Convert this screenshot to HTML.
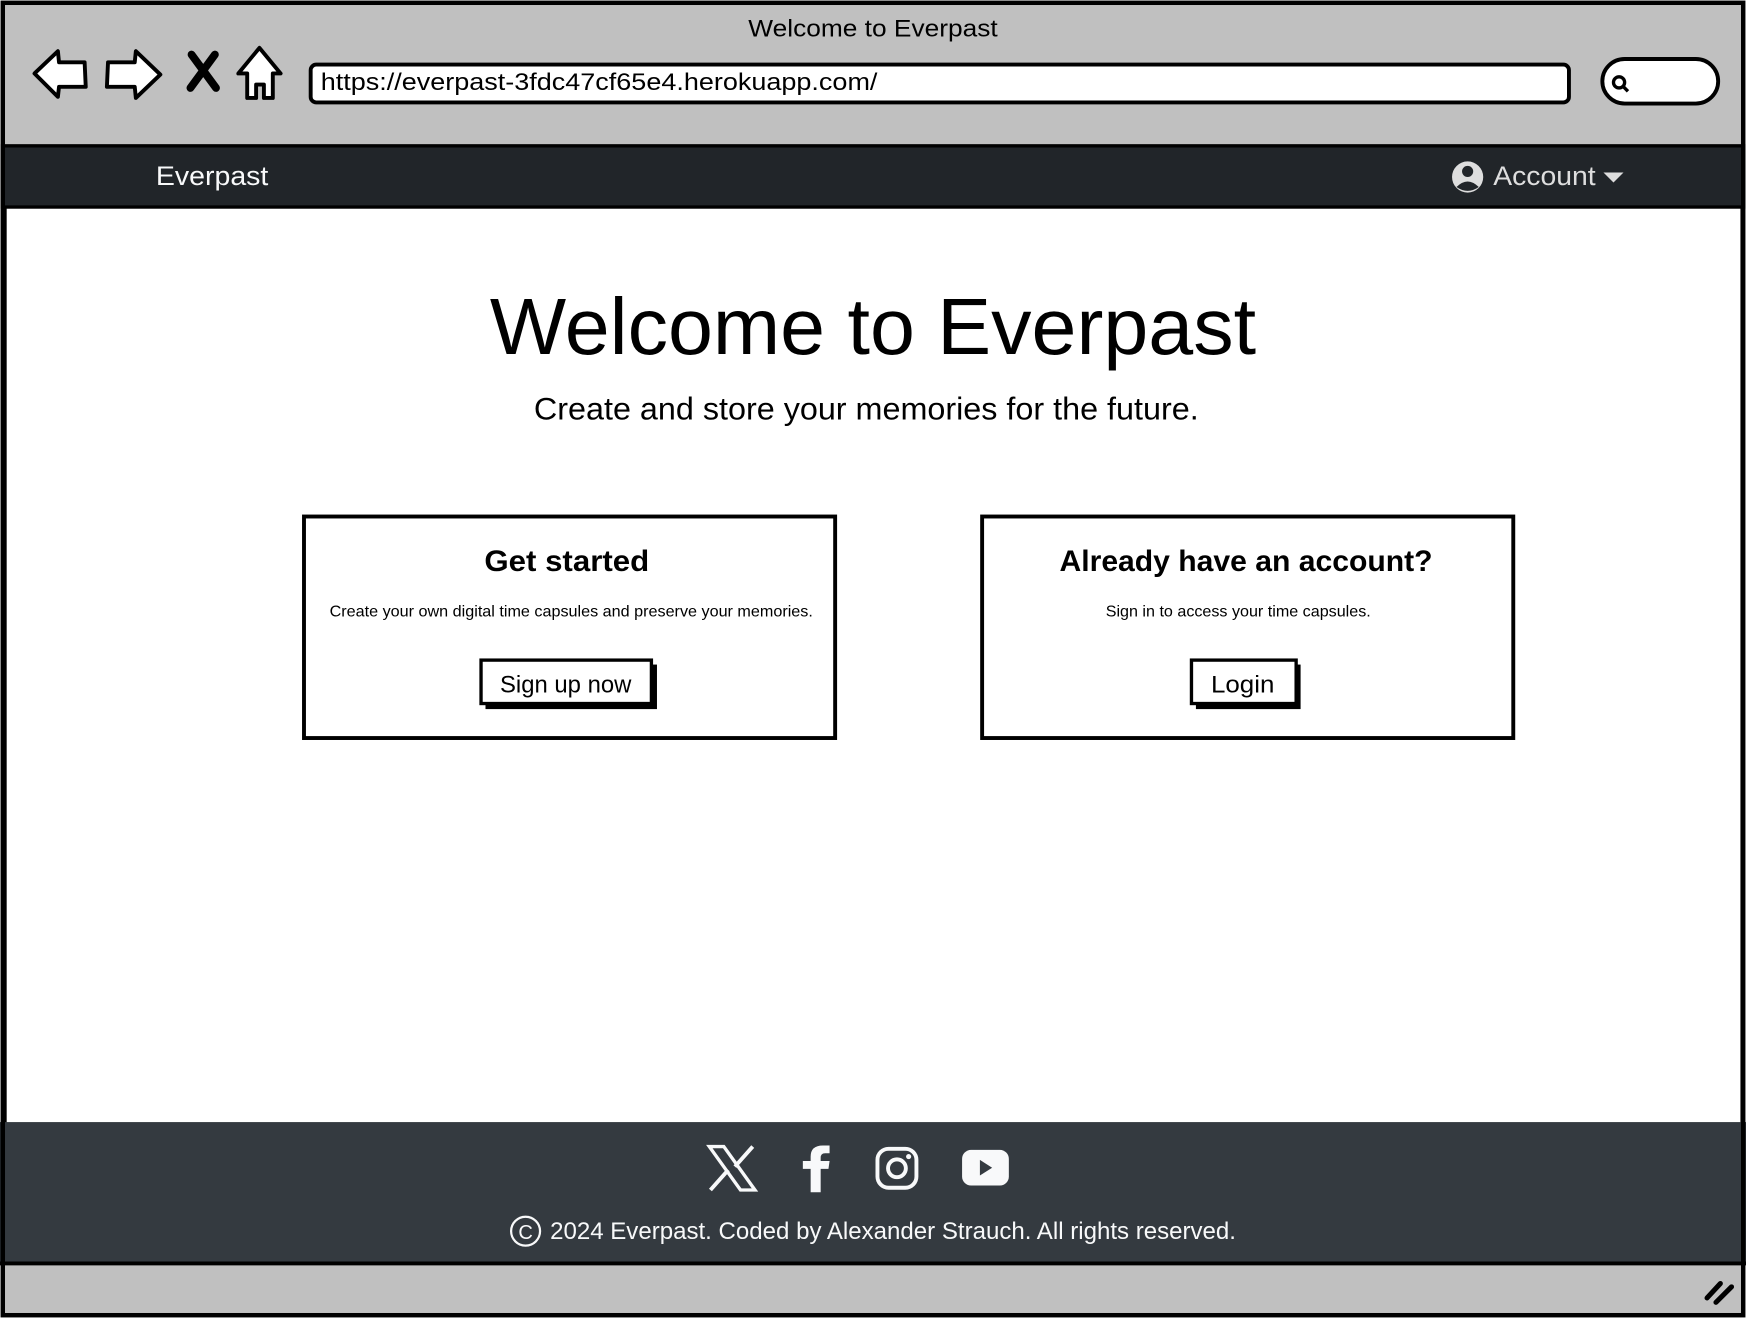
<!DOCTYPE html>
<html><head><meta charset="utf-8"><style>
html,body{margin:0;padding:0;background:#fff;width:1746px;height:1318px;overflow:hidden}
svg{display:block}
text{font-family:"Liberation Sans",sans-serif}
</style></head><body>
<svg width="1746" height="1318" viewBox="0 0 1568 1184" preserveAspectRatio="none" xmlns="http://www.w3.org/2000/svg">
<rect x="0" y="0" width="1568" height="1184" fill="#fff"/>
<rect x="3" y="3" width="1562" height="128" fill="#c0c0c0"/>
<text x="784" y="33" font-size="22" text-anchor="middle" fill="#000" textLength="224" lengthAdjust="spacingAndGlyphs">Welcome to Everpast</text>
<path d="M31 66 L52 46 L53 56 L76 56 L77 78 L53 78 L52 87 Z" fill="#fff" stroke="#000" stroke-width="3.5" stroke-linejoin="round"/>
<path d="M144 67 L122 46 L121 56 L97 56 L96 78 L121 78 L122 88 Z" fill="#fff" stroke="#000" stroke-width="3.5" stroke-linejoin="round"/>
<path d="M172 49 L194 79 M193 49 L171 79" stroke="#000" stroke-width="7" stroke-linecap="round"/>
<path d="M233 43 L252 66 L245 66 L245 88 L237 88 L237 76 L230 76 L230 88 L222 88 L222 66 L214 66 Z" fill="#fff" stroke="#000" stroke-width="3.5" stroke-linejoin="round"/>
<rect x="279" y="58" width="1130" height="34" rx="5" fill="#fff" stroke="#000" stroke-width="3.5"/>
<text x="288" y="81" font-size="22" fill="#000" textLength="500" lengthAdjust="spacingAndGlyphs">https://everpast-3fdc47cf65e4.herokuapp.com/</text>
<rect x="1439" y="53" width="104" height="40" rx="20" fill="#fff" stroke="#000" stroke-width="3.5"/>
<circle cx="1454" cy="74" r="5" fill="none" stroke="#000" stroke-width="3"/>
<path d="M1457 77 L1462 82" stroke="#000" stroke-width="3"/>
<rect x="2" y="131" width="1564" height="55" fill="#212529" stroke="#000" stroke-width="3"/>
<text x="140" y="166" font-size="24" fill="#f8f9fa" textLength="101" lengthAdjust="spacingAndGlyphs">Everpast</text>
<circle cx="1318" cy="159" r="14" fill="#dedede"/>
<circle cx="1318" cy="154" r="5" fill="#212529"/>
<path d="M1308 168 Q1318 158 1328 168 Q1318 175 1308 168 Z" fill="#212529"/>
<text x="1341" y="166" font-size="24" fill="#dedede" textLength="92" lengthAdjust="spacingAndGlyphs">Account</text>
<path d="M1440 155 L1458 155 L1449 164 Z" fill="#dedede"/>
<path d="M4.5 186 L4.5 1136 M1564.5 186 L1564.5 1136" stroke="#000" stroke-width="3"/>
<text x="784" y="318" font-size="72" text-anchor="middle" fill="#000" textLength="688" lengthAdjust="spacingAndGlyphs">Welcome to Everpast</text>
<text x="778" y="377" font-size="28" text-anchor="middle" fill="#000" textLength="597" lengthAdjust="spacingAndGlyphs">Create and store your memories for the future.</text>
<rect x="273" y="464" width="477" height="199" fill="#fff" stroke="#000" stroke-width="3.5"/>
<rect x="882" y="464" width="477" height="199" fill="#fff" stroke="#000" stroke-width="3.5"/>
<text x="509" y="513" font-size="27" font-weight="bold" text-anchor="middle" textLength="148" lengthAdjust="spacingAndGlyphs">Get started</text>
<text x="1119" y="513" font-size="27" font-weight="bold" text-anchor="middle" textLength="335" lengthAdjust="spacingAndGlyphs">Already have an account?</text>
<text x="513" y="554" font-size="14" text-anchor="middle" textLength="434" lengthAdjust="spacingAndGlyphs">Create your own digital time capsules and preserve your memories.</text>
<text x="1112" y="554" font-size="14" text-anchor="middle" textLength="238" lengthAdjust="spacingAndGlyphs">Sign in to access your time capsules.</text>
<rect x="436" y="597" width="154" height="40" fill="#000"/>
<rect x="432" y="593" width="153" height="39" fill="#fff" stroke="#000" stroke-width="3"/>
<text x="508" y="622" font-size="22" text-anchor="middle" textLength="118" lengthAdjust="spacingAndGlyphs">Sign up now</text>
<rect x="1074" y="597" width="94" height="40" fill="#000"/>
<rect x="1070" y="593" width="94" height="39" fill="#fff" stroke="#000" stroke-width="3"/>
<text x="1116" y="622" font-size="22" text-anchor="middle" textLength="57" lengthAdjust="spacingAndGlyphs">Login</text>
<rect x="0" y="1008" width="1568" height="126" fill="#343a40"/>
<path d="M637 1030 L650 1030 L678 1069 L665 1069 Z" fill="none" stroke="#f8f9fa" stroke-width="3"/>
<path d="M676 1030 L660 1048 M638 1069 L654 1051" stroke="#f8f9fa" stroke-width="3.5"/>
<path d="M728 1071 L728 1050 L721 1050 L721 1043 L728 1043 L728 1039 Q728 1029 739 1029 L745 1029 L745 1036 L741 1036 Q737 1036 737 1040 L737 1043 L745 1043 L744 1050 L737 1050 L737 1071 Z" fill="#f8f9fa"/>
<rect x="788" y="1032" width="35" height="35" rx="10" fill="none" stroke="#f8f9fa" stroke-width="3.5"/>
<circle cx="805.5" cy="1049.5" r="8" fill="none" stroke="#f8f9fa" stroke-width="3.5"/>
<circle cx="816" cy="1039" r="2.3" fill="#f8f9fa"/>
<rect x="864" y="1033" width="42" height="32" rx="8" fill="#f8f9fa"/>
<path d="M880 1042 L891 1049 L880 1056 Z" fill="#343a40"/>
<circle cx="472" cy="1106" r="13" fill="none" stroke="#f8f9fa" stroke-width="2"/>
<text x="472" y="1113" font-size="18" text-anchor="middle" fill="#f8f9fa">C</text>
<text x="494" y="1113" font-size="22" fill="#f8f9fa" textLength="616" lengthAdjust="spacingAndGlyphs">2024 Everpast. Coded by Alexander Strauch. All rights reserved.</text>
<rect x="3" y="1135" width="1562" height="45" fill="#c0c0c0"/>
<path d="M0 1135 L1568 1135" stroke="#000" stroke-width="3.5"/>
<path d="M1533 1166 L1545 1153 M1541 1170 L1555 1156" stroke="#000" stroke-width="4.5" stroke-linecap="round"/>
<rect x="2.5" y="2.5" width="1563" height="1179" fill="none" stroke="#000" stroke-width="4"/>
</svg>
</body></html>
